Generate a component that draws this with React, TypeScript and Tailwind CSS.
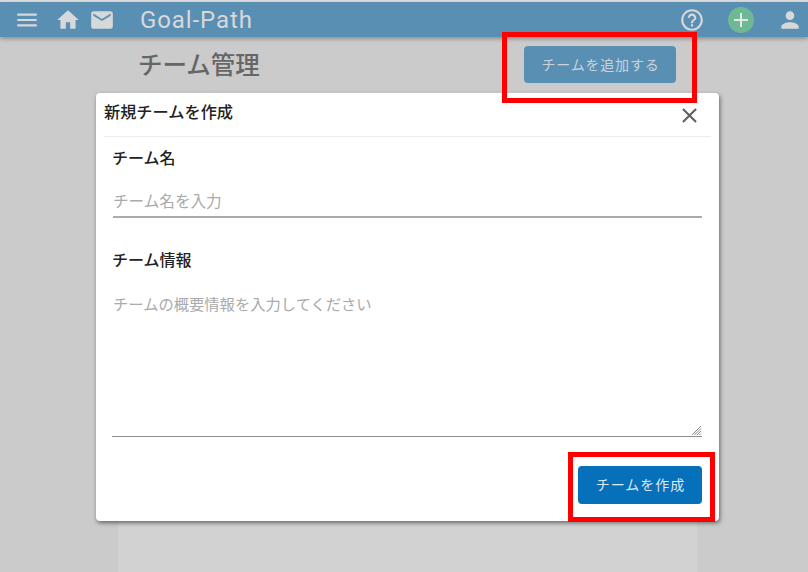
import { MdMenu, MdHome, MdEmail, MdHelpOutline, MdPerson, MdClose, MdAdd } from "react-icons/md";

const jp = "font-['Roboto','Noto_Sans_CJK_JP',sans-serif]";

export default function App() {
  return (
    <div className={`relative w-[808px] h-[572px] overflow-hidden bg-[#cbcbcb] ${jp}`}>
      <div className="h-[2px] bg-[#dcdcdc]" />
      <header className="h-[35px] flex items-center bg-[#5a8fb4] shadow-[0_2px_4px_rgba(0,0,0,0.3)] text-[#d6d8da] relative">
        <MdMenu className="ml-[14px] w-[26px] h-[26px]" />
        <MdHome className="ml-[15px] w-[26px] h-[26px]" />
        <MdEmail className="ml-[8px] w-[26px] h-[26px]" />
        <span className="ml-[25px] text-[24px] tracking-[0.9px] leading-none">Goal-Path</span>
        <div className="ml-auto flex items-center">
          <MdHelpOutline className="w-[26px] h-[26px]" />
          <span className="ml-[23px] w-[26px] h-[26px] rounded-full bg-[#6eb893] flex items-center justify-center">
            <MdAdd className="w-[24px] h-[24px] text-[#e2e8e4]" />
          </span>
          <MdPerson className="ml-[23px] mr-[5px] w-[26px] h-[26px]" />
        </div>
      </header>
      <main className="flex flex-col items-center pl-[7px]">
        <div className="w-[579px] h-[55px] flex items-center justify-between">
          <h1 className="ml-[20px] mt-[3px] text-[24.5px] font-medium text-[#666666] leading-none">チーム管理</h1>
          <button className="mr-[21px] mt-[-1px] w-[152px] h-[37px] rounded-[4px] bg-[#5a8fb4] pt-[2px] pl-[1px] text-[#c9d3da] text-[14px] tracking-[0.8px]">チームを追加する</button>
        </div>
        <div className="w-[579px] h-[480px] bg-[#d2d2d2]" />
      </main>

      <div className="absolute left-[96px] top-[93px] w-[623px] h-[428px] bg-white rounded-[4px] shadow-[1px_2px_4px_rgba(0,0,0,0.5)] flex flex-col">
        <div className="mx-[8px] h-[44px] flex items-center justify-between border-b border-[#ececec]">
          <span className="text-[16.2px] font-medium text-[#222] leading-none mt-[-2px]">新規チームを作成</span>
          <MdClose className="mr-[9px] mt-[2px] w-[25px] h-[25px] text-[#5f5f5f]" />
        </div>
        <div className="px-[17px] flex flex-col flex-1">
          <label className="-ml-[1px] mt-[12px] text-[16px] font-medium text-[#222] leading-[20px]">チーム名</label>
          <div className="mt-[23px] h-[26px] w-[589px] border-b-2 border-[#ababab] text-[15.6px] text-[#aaaaaa] leading-[20px]">チーム名を入力</div>
          <label className="-ml-[1px] mt-[33px] text-[16px] font-medium text-[#222] leading-[20px]">チーム情報</label>
          <div className="relative mt-[24px] h-[142px] w-[590px] -ml-[1px] pl-[1px] border-b border-[#8d8d8d] text-[15.3px] text-[#aaaaaa] leading-[20px]">
            チームの概要情報を入力してください
            <svg className="absolute right-[0px] bottom-[0px]" width="11" height="11" viewBox="0 0 11 11">
              <path d="M1 10 L10 1 M3.5 10 L10 3.5 M6 10 L10 6 M8.5 10 L10 8.5" stroke="#8a8a8a" strokeWidth="1" fill="none" />
            </svg>
          </div>
          <div className="flex justify-end mt-[29px]">
            <button className="w-[124px] h-[38px] rounded-[4px] bg-[#0770bb] pl-[1px] text-[#dfeaf3] text-[14px] tracking-[1px]">チームを作成</button>
          </div>
        </div>
      </div>

      <div className="absolute left-[502px] top-[32px] w-[195px] h-[71px] border-[5px] border-[#ff0000]" />
      <div className="absolute left-[568px] top-[452px] w-[147px] h-[70px] border-[5px] border-[#ff0000]" />
    </div>
  );
}
